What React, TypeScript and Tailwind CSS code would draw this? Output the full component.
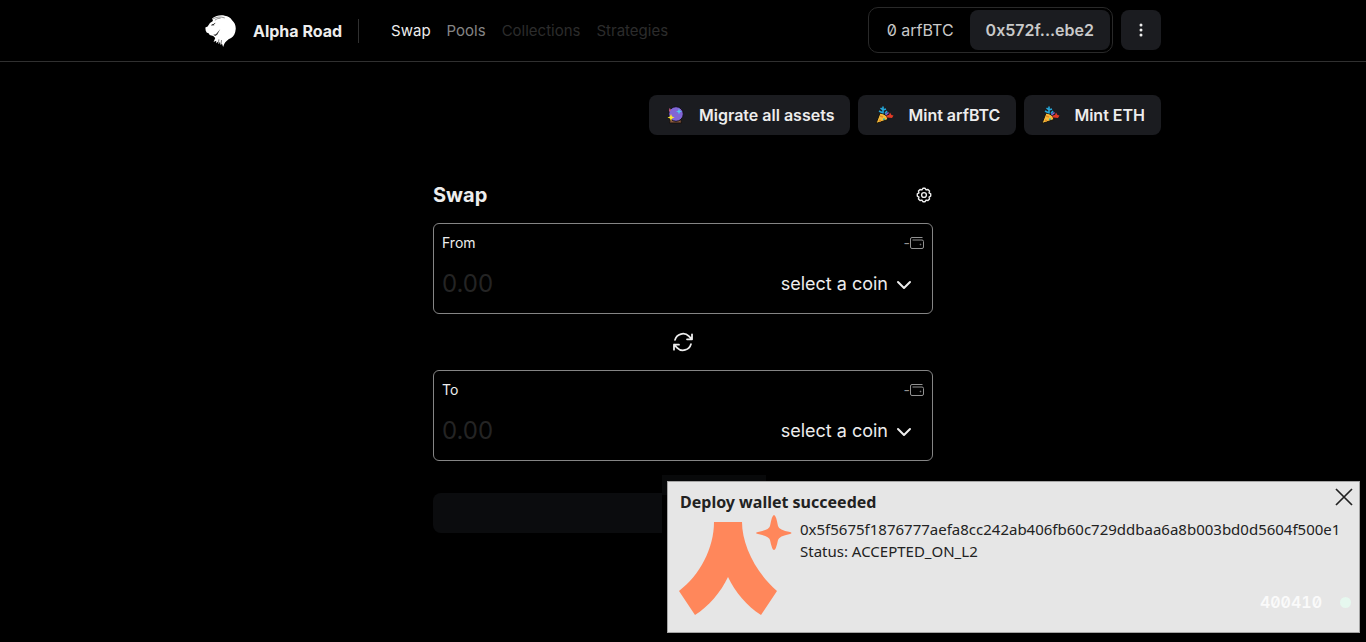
import type { ReactNode } from "react";

function LionLogo() {
  return (
    <svg viewBox="0 0 94 97" preserveAspectRatio="xMinYMid meet" className="h-8 w-8 shrink-0" aria-hidden="true">
      <path
        fill="#fff"
        d="M22 10 C34 1 48 -1 60 2 C70 3 78 8 82 16 C90 23 94 33 93 43 C92 55 88 64 79 70 C68 75 61 82 58 89 L55 97 L51 86 L48 92 L45 81 L42 89 L39 81 L34 86 L34 78 L26 82 L31 70 L25 64 L14 61 L12 56 L5 53 L2 47 L1 38 L8 35 L15 24 L24 18 Z"
      />
      <path d="M25 11 C36 6 48 4 60 9 M30 16 C36 11 40 10 47 10" fill="none" stroke="#333" strokeWidth="1.6" />
      <path d="M19 31 L27 28 L31 24 M22 30 L28 30" fill="none" stroke="#000" strokeWidth="2.2" />
      <path d="M25 60 L33 58 L46 43 L37 60 L31 64 Z" fill="#333" />
      <path d="M42 74 L41 84 M50 76 L49 86" fill="none" stroke="#222" strokeWidth="1.8" />
    </svg>
  );
}

function CrystalBall() {
  return (
    <svg viewBox="0 0 20 20" className="h-5 w-5 shrink-0" aria-hidden="true">
      <path d="M5.500 13h10l1 5h-12z" fill="#8d5b3f" stroke="#17110f" strokeWidth="1" />
      <circle cx="11" cy="9" r="7.300" fill="#8165d6" stroke="#111018" strokeWidth="1" />
      <path d="M4.500 3l1.500 2-2 2z" fill="#ec6594" />
      <path d="M14 3.500l.8 2.200 2.200.8-2.200.8-.8 2.200-.8-2.200-2.200-.8 2.200-.8z" fill="#55c8f2" />
      <path d="M6 9l1 2.500 2.500 1-2.500 1L6 16l-1-2.500-2.500-1 2.500-1z" fill="#ffe82b" />
    </svg>
  );
}

function PartyPopper() {
  return (
    <svg viewBox="0 0 20 20" className="h-5 w-5 shrink-0" aria-hidden="true">
      <path d="M2 18.500 6 8q7 1 8 6.500z" fill="#f5bd3c" stroke="#16130c" strokeWidth="1" />
      <path d="M6 11l3 1M5 15l2 1" stroke="#e68b24" strokeWidth="1.400" />
      <path d="M9 13.500h2V15H9z" fill="#36b6a2" />
      <path d="M9 8.500V5L6.500 3M9 5l3-1M9 4V1.500M5 6l3 1.500M11 8.500 13 6" fill="none" stroke="#25a7d9" strokeWidth="1.600" />
      <path d="M11.500 10l3-2.500" stroke="#8d65d5" strokeWidth="1.500" />
      <path d="M12 12q1-2.500 3-2l1-2.500 1.500 2.500 2 .5-1.500 2.500-4.500-.5z" fill="#e23a25" />
    </svg>
  );
}

function ActionButton({ icon, children }: { icon: ReactNode; children: ReactNode }) {
  return (
    <button type="button" className="flex h-10 items-center gap-3.5 rounded-lg bg-[#1b1c20] px-4 font-semibold text-[#ededed]">
      {icon}
      {children}
    </button>
  );
}

function Wallet() {
  return (
    <svg viewBox="0 0 14 12" className="h-3 w-3.5" fill="none" stroke="currentColor" aria-hidden="true">
      <path d="M12.500.5H2Q.5.5.5 2v8Q.5 11.500 2 11.500h10q1.500 0 1.500-1.500V4.500Q13.500 3 12 3H2.500" />
      <circle cx="10.500" cy="7.500" r=".4" />
    </svg>
  );
}

function CoinBox({ id, label }: { id: string; label: string }) {
  return (
    <div className="flex h-[91px] flex-col rounded-md border border-[#858585] px-2 pt-2">
      <div className="flex h-[22px] items-center justify-between">
        <label htmlFor={id} className="text-sm text-[#ededed]">{label}</label>
        <span className="flex items-center text-sm text-[#929292]">-<Wallet /></span>
      </div>
      <div className="mt-2 flex h-11 items-center justify-between pr-3">
        <input
          id={id}
          placeholder="0.00"
          inputMode="decimal"
          className="w-40 min-w-0 bg-transparent text-2xl text-white outline-none placeholder:text-[#242424]"
        />
        <button type="button" className="flex items-center gap-2 text-lg text-[#ededed]">
          select a coin
          <svg viewBox="0 0 16 16" className="mt-px h-4 w-4" fill="none" stroke="currentColor" strokeWidth="2" strokeLinecap="round" strokeLinejoin="round" aria-hidden="true">
            <path d="M2 5l6 6 6-6" />
          </svg>
        </button>
      </div>
    </div>
  );
}

function Toast() {
  return (
    <aside role="status" className="absolute right-0 bottom-0 w-[704px] max-w-full bg-black pt-1.5 pr-1.5 pb-[9px] pl-[5px]">
      <div className="absolute top-0 left-0 h-5 w-[104px] bg-[#08090a]" />
      <div className="relative h-[152px] border border-[#a5a5a5] bg-[#e6e6e6] text-[#222]">
        <div className="flex h-9 items-start justify-between pt-[5px] pr-[5px] pl-3">
          <h2 className="pt-[3px] font-['Noto_Sans'] text-base font-bold">Deploy wallet succeeded</h2>
          <button type="button" aria-label="Close notification" className="h-5 w-5">
            <svg viewBox="0 0 20 20" className="h-5 w-5" fill="none" stroke="#222" strokeWidth="1.700" aria-hidden="true">
              <path d="M2 2l16 16M18 2L2 18" />
            </svg>
          </button>
        </div>
        <div className="flex gap-2 pl-2.5">
          <svg viewBox="0 2 114 102" className="h-[102px] w-[114px] shrink-0 overflow-visible" fill="#ff875b" aria-hidden="true">
            <path d="M36 6H64C64 28 77 56 99 75L83 99C69 90 57 76 50 61C43 76 30 91 17 99L1 75C22 59 36 32 36 6Z" />
            <path d="M96 -1Q98 -1 100 10Q101 14 112 16Q115 17 112 18Q101 20 100 24Q98 34 96 34Q94 34 92 24Q91 20 80 18Q76 17 80 16Q91 14 92 10Q94 -1 96 -1Z" />
          </svg>
          <p className="font-['Noto_Sans'] text-[15px] leading-[22px] whitespace-nowrap">
            0x5f5675f1876777aefa8cc242ab406fb60c729ddbaa6a8b003bd0d5604f500e1
            <br />
            Status: ACCEPTED_ON_L2
          </p>
        </div>
        <div className="absolute right-2 bottom-5 flex items-center gap-[18px] leading-5 font-semibold text-[#fafafa] slashed-zero tabular-nums">
          400410
          <span className="h-[11px] w-[11px] rounded-full bg-[#e6f8ef]" />
        </div>
      </div>
    </aside>
  );
}

export default function App() {
  return (
    <div className="relative min-h-screen overflow-hidden bg-black font-['Inter',sans-serif] text-base text-[#ededed]">
      <header className="border-b border-[#303030]">
        <div className="mx-auto flex h-[61px] max-w-[956px] items-center justify-between">
          <div className="flex items-center">
            <a href="#home" className="flex items-center gap-4 font-bold">
              <LionLogo />
              Alpha Road
            </a>
            <span className="ml-4 h-6 w-px bg-[#303030]" />
            <nav className="ml-8 flex gap-4 pt-0.5 text-[15px]">
              <a href="#swap">Swap</a>
              <a href="#pools" className="text-[#858585]">Pools</a>
              <a href="#collections" className="text-[#2c2c2c]">Collections</a>
              <a href="#strategies" className="text-[#2c2c2c]">Strategies</a>
            </nav>
          </div>
          <div className="flex items-center gap-2 pb-0.5">
            <div className="flex items-center rounded-[10px] border border-[#292929] p-0.5 text-[#c9c9c9]">
              <span className="px-4 slashed-zero">0 arfBTC</span>
              <button type="button" className="h-10 rounded-lg bg-[#1b1c20] px-4 font-semibold">0x572f...ebe2</button>
            </div>
            <button type="button" aria-label="More options" className="flex h-10 w-10 items-center justify-center rounded-lg bg-[#1b1c20]">
              <svg viewBox="0 0 4 14" className="h-3.5 w-1" fill="#ededed" aria-hidden="true">
                <circle cx="2" cy="2" r="1.500" />
                <circle cx="2" cy="7" r="1.500" />
                <circle cx="2" cy="12" r="1.500" />
              </svg>
            </button>
          </div>
        </div>
      </header>
      <main>
        <div className="mx-auto flex max-w-[956px] justify-end gap-2 pt-[33px]">
          <ActionButton icon={<CrystalBall />}>Migrate all assets</ActionButton>
          <ActionButton icon={<PartyPopper />}>Mint arfBTC</ActionButton>
          <ActionButton icon={<PartyPopper />}>Mint ETH</ActionButton>
        </div>
        <section className="mx-auto mt-10 max-w-[500px]">
          <div className="flex h-10 items-center justify-between">
            <h1 className="text-xl font-bold">Swap</h1>
            <button type="button" aria-label="Swap settings" className="pr-px">
              <svg viewBox="0 0 16 16" className="h-4 w-4" fill="none" stroke="currentColor" strokeWidth="1.400" strokeLinejoin="round" aria-hidden="true">
                <path d="M5.900 2.930L6.900 1.300H9.100L10.100 2.930L11.960 2.480L13.520 4.040L13.070 5.900L14.700 6.900V9.100L13.070 10.100L13.520 11.960L11.960 13.520L10.100 13.070L9.100 14.700H6.900L5.900 13.070L4.040 13.520L2.480 11.960L2.930 10.100L1.300 9.100V6.900L2.930 5.900L2.480 4.040L4.040 2.480Z" />
                <circle cx="8" cy="8" r="2.400" />
              </svg>
            </button>
          </div>
          <div className="mt-2">
            <CoinBox id="from" label="From" />
          </div>
          <div className="flex h-14 items-center justify-center">
            <button type="button" aria-label="Switch coins">
              <svg viewBox="0 0 24 24" className="h-6 w-6" fill="none" stroke="currentColor" strokeWidth="1.800" strokeLinecap="round" strokeLinejoin="round" aria-hidden="true">
                <path d="M16.023 9.348h4.992v-.001M2.985 19.644v-4.992m0 0h4.992m-4.993 0 3.181 3.183a8.250 8.250 0 0 0 13.803-3.700M4.031 9.865a8.250 8.250 0 0 1 13.803-3.700l3.181 3.182m0-4.991v4.990" />
              </svg>
            </button>
          </div>
          <CoinBox id="to" label="To" />
          <button type="button" disabled aria-label="Submit swap" className="mt-8 block h-10 w-full rounded-lg bg-[#0b0c0e]" />
        </section>
      </main>
      <Toast />
    </div>
  );
}
